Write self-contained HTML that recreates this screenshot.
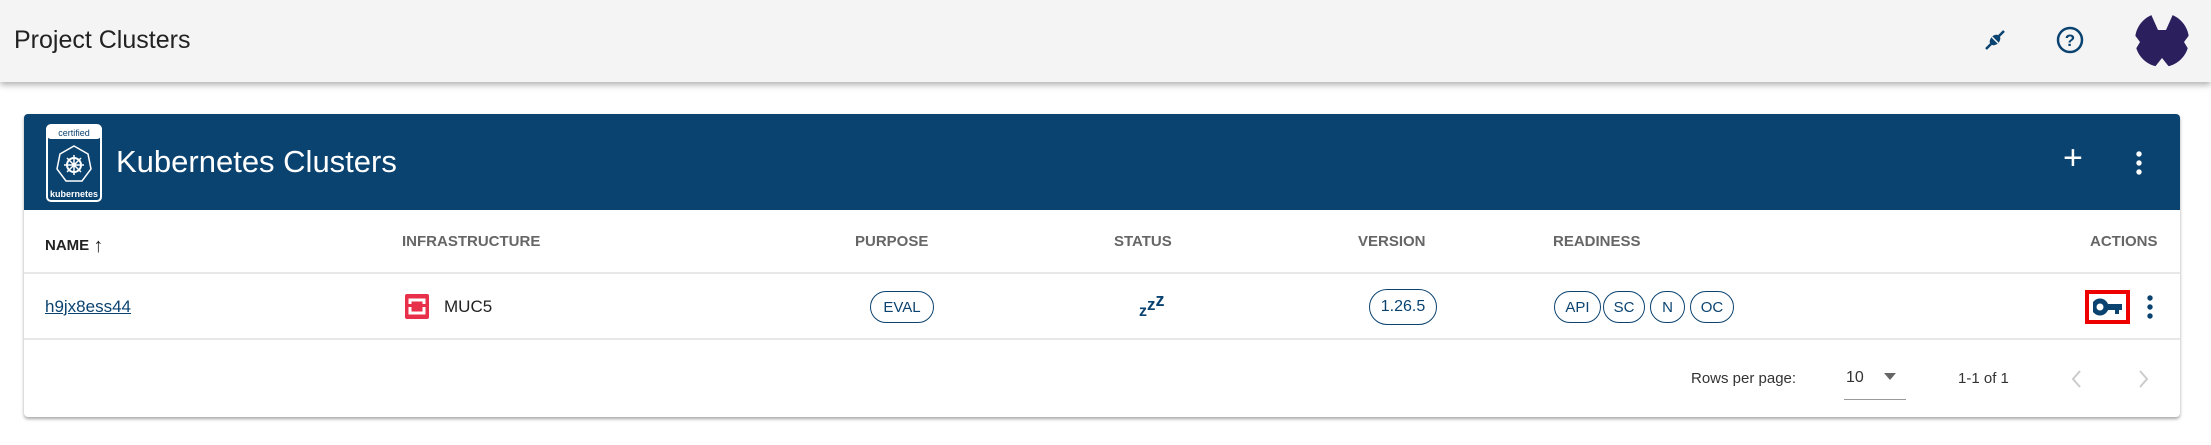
<!DOCTYPE html>
<html><head><meta charset="utf-8"><style>
*{box-sizing:border-box;margin:0;padding:0}
body{width:2211px;height:445px;background:#fff;font-family:"Liberation Sans",sans-serif;position:relative;overflow:hidden}
.top{position:absolute;left:0;top:0;width:2211px;height:82px;background:#f4f4f4;box-shadow:0 3px 6px rgba(0,0,0,.3)}
.abs{position:absolute}
.card{position:absolute;left:24px;top:114px;width:2156px;height:303px;background:#fff;border-radius:4px;box-shadow:0 2px 3px rgba(0,0,0,.35)}
.hdr{position:absolute;left:0;top:0;width:2156px;height:96px;background:#0b4370;border-radius:4px 4px 0 0}
.th{position:absolute;top:233px;font-size:15px;font-weight:bold;color:#666}
.chip{position:absolute;border:1.5px solid #0b4370;border-radius:16px;color:#0b4370;font-size:15px;display:flex;align-items:center;justify-content:center}
.line{position:absolute;left:24px;width:2156px;height:2px;background:#e8e8e8}
</style></head><body>
<div class="top"></div>
<div class="abs" style="left:14px;top:26px;font-size:25px;color:#222">Project Clusters</div>
<svg class="abs" style="left:1983px;top:28px" width="24" height="24" viewBox="0 0 24 24"><path d="M21 3 L16 8 M3 21 L8 16" stroke="#0b4370" stroke-width="2.5"/><ellipse cx="12" cy="12" rx="4.5" ry="6" transform="rotate(45 12 12)" fill="#0b4370"/><path d="M9 9 L15 15" stroke="#f4f4f4" stroke-width="1.5"/></svg>
<svg class="abs" style="left:2055px;top:25px" width="30" height="30" viewBox="0 0 30 30"><circle cx="15" cy="15" r="12" fill="none" stroke="#0b4370" stroke-width="2.5"/><text x="15" y="21" text-anchor="middle" font-size="17" font-weight="bold" fill="#0b4370" font-family="Liberation Sans">?</text></svg>
<svg class="abs" style="left:2134px;top:12px" width="56" height="56" viewBox="0 0 56 56"><circle cx="28" cy="28" r="27" fill="#2c1f5e"/><path d="M16 0 L24 18 L32 18 L40 0 Z" fill="#f4f4f4"/><path d="M0 22 L6 30 L0 40 Z M56 22 L50 30 L56 40 Z" fill="#f4f4f4"/><path d="M20 56 L28 46 L36 56 Z" fill="#f4f4f4"/></svg>

<div class="card">
<div class="hdr"></div>
</div>
<svg class="abs" style="left:46px;top:124px" width="56" height="78" viewBox="0 0 56 78"><rect x="1" y="1" width="54" height="76" rx="4" fill="#0b4370" stroke="#fff" stroke-width="2"/><rect x="1" y="1" width="54" height="14" rx="4" fill="#fff"/><text x="28" y="12" text-anchor="middle" font-size="9" fill="#0b4370" font-family="Liberation Sans">certified</text><polygon points="28,22 42,30 45,45 36,57 20,57 11,45 14,30" fill="none" stroke="#fff" stroke-width="1.5"/><circle cx="28" cy="41" r="7" fill="none" stroke="#fff" stroke-width="2"/><path d="M28 31V51M18 41H38M21 34L35 48M35 34L21 48" stroke="#fff" stroke-width="1.5"/><text x="28" y="73" text-anchor="middle" font-size="9" fill="#fff" font-weight="bold" font-family="Liberation Sans">kubernetes</text></svg>
<div class="abs" style="left:116px;top:144px;font-size:31px;color:#fff">Kubernetes Clusters</div>
<div class="abs" style="left:2063px;top:141px;font-size:34px;color:#fff;line-height:1">+</div>
<svg class="abs" style="left:2134px;top:150px" width="10" height="26"><circle cx="5" cy="4" r="2.7" fill="#fff"/><circle cx="5" cy="13" r="2.7" fill="#fff"/><circle cx="5" cy="22" r="2.7" fill="#fff"/></svg>

<div class="th" style="left:45px;color:#222">NAME <span style="font-weight:normal;font-size:20px;position:relative;top:2px">↑</span></div>
<div class="th" style="left:402px">INFRASTRUCTURE</div>
<div class="th" style="left:855px">PURPOSE</div>
<div class="th" style="left:1114px">STATUS</div>
<div class="th" style="left:1358px">VERSION</div>
<div class="th" style="left:1553px">READINESS</div>
<div class="th" style="left:2090px">ACTIONS</div>
<div class="line" style="top:272px"></div>
<div class="abs" style="left:45px;top:297px;font-size:17px;color:#0b4370;text-decoration:underline">h9jx8ess44</div>
<svg class="abs" style="left:405px;top:294px" width="24" height="25"><rect width="24" height="25" rx="2" fill="#e8304a"/><rect x="5" y="6" width="14" height="13" fill="none" stroke="#fff" stroke-width="3"/><rect x="0" y="10" width="24" height="3" fill="#e8304a"/></svg>
<div class="abs" style="left:444px;top:297px;font-size:17px;color:#222">MUC5</div>
<div class="chip" style="left:870px;top:291px;width:64px;height:32px">EVAL</div>
<div class="abs" style="left:1139px;top:290px;color:#0b4370;font-weight:bold;font-size:16px"><span style="position:relative;top:10px">z</span><span style="position:relative;top:4px;font-size:17px">z</span><span style="font-size:18px">z</span></div>
<div class="chip" style="left:1369px;top:289px;width:68px;height:36px;border-radius:18px;font-size:16px">1.26.5</div>
<div class="chip" style="left:1554px;top:291px;width:47px;height:32px">API</div>
<div class="chip" style="left:1603px;top:291px;width:42px;height:32px">SC</div>
<div class="chip" style="left:1650px;top:291px;width:35px;height:32px">N</div>
<div class="chip" style="left:1690px;top:291px;width:44px;height:32px">OC</div>
<div class="abs" style="left:2085px;top:290px;width:45px;height:34px;border:4px solid #e00;background:#fff"></div>
<svg class="abs" style="left:2093px;top:298px" width="30" height="18" viewBox="0 0 30 18"><circle cx="7" cy="9" r="6" fill="none" stroke="#0b4370" stroke-width="5"/><path d="M12 6H29V12H26V16H22V12H12Z" fill="#0b4370"/></svg>
<svg class="abs" style="left:2145px;top:294px" width="10" height="26"><circle cx="5" cy="4" r="2.7" fill="#0b4370"/><circle cx="5" cy="13" r="2.7" fill="#0b4370"/><circle cx="5" cy="22" r="2.7" fill="#0b4370"/></svg>
<div class="line" style="top:338px"></div>
<div class="abs" style="left:1691px;top:370px;font-size:15px;color:#333">Rows per page:</div>
<div class="abs" style="left:1846px;top:369px;font-size:16px;color:#333">10</div>
<div class="abs" style="left:1884px;top:373px;width:0;height:0;border-left:6px solid transparent;border-right:6px solid transparent;border-top:7px solid #666"></div>
<div class="abs" style="left:1844px;top:399px;width:62px;height:1px;background:#999"></div>
<div class="abs" style="left:1958px;top:370px;font-size:15px;color:#333">1-1 of 1</div>
<svg class="abs" style="left:2070px;top:369px" width="14" height="20"><path d="M10 2L3 10L10 18" fill="none" stroke="#ccc" stroke-width="2"/></svg>
<svg class="abs" style="left:2136px;top:369px" width="14" height="20"><path d="M4 2L11 10L4 18" fill="none" stroke="#ccc" stroke-width="2"/></svg>
</body></html>
